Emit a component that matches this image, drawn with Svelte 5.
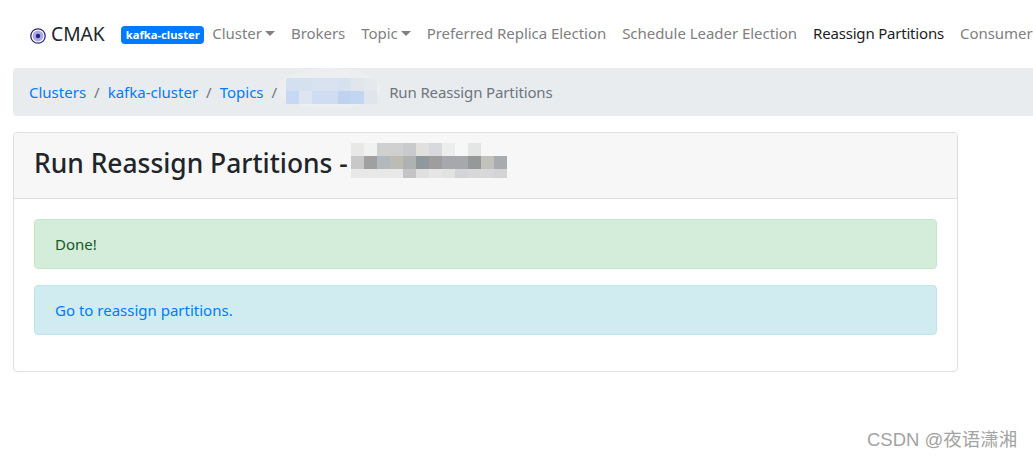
<script>
  const links = [
    { label: "Cluster", caret: true },
    { label: "Brokers" },
    { label: "Topic", caret: true },
    { label: "Preferred Replica Election" },
    { label: "Schedule Leader Election" },
    { label: "Reassign Partitions", active: true },
    { label: "Consumers" }
  ];
  const crumbs = ["Clusters", "kafka-cluster", "Topics"];

  // mosaic left over where the topic name was blurred out
  const crumbMosaic = [
    "#d3e0f2 #d6e1f0 #d8e2f0 #d8e2f0 #d6e1ef #e1e6ec #e6e9ec",
    "#c6d8f3 #dde5f0 #cfdcf1 #cfdcf1 #bfd3f1 #c2d6f2 #dfe5ea"
  ];
  const titleMosaic = [
    "#e8e8e6 #f0f2f2 #d0d0d0 #d0d0d0 #c8cacc #e0e0de #d8d9dc #eceeee #f7f7f7 #e4e6e6 #f7f7f7 #f7f7f7",
    "#c8c8c8 #a0a0a0 #b2b8bb #bcbcb4 #b0b2b2 #8f989c #a09e9c #a6a8ae #a6a8ae #959a98 #c2c2bc #a6acb0",
    "#e8e8e8 #e8e8e8 #e8e8e8 #e8e8e8 #c4c4c6 #e0e0e0 #e6e6e6 #e2e2e0 #d2d4d8 #d8d8d8 #d8d8da #d4d4d6"
  ];
  const cells = (rows) => rows.flatMap((r) => r.split(" "));
</script>

<nav class="navbar">
  <a class="brand" href="#top">
    <svg class="logo" viewBox="0 0 16 16" width="16" height="16" aria-hidden="true">
      <circle cx="8" cy="8" r="7.2" fill="#fff" stroke="#2c2a7c" stroke-width="1.3" />
      <circle cx="8" cy="8" r="5.4" fill="#a9a8e0" />
      <circle cx="8" cy="8" r="2.2" fill="#24218a" />
    </svg>
    CMAK
  </a>
  <span class="badge">kafka-cluster</span>
  <ul class="links">
    {#each links as link}
      <li class:active={link.active}>
        {link.label}{#if link.caret}<span class="caret"></span>{/if}
      </li>
    {/each}
  </ul>
</nav>

<div class="breadcrumb">
  {#each crumbs as crumb}
    <a href="#top">{crumb}</a>
    <span class="sep">/</span>
  {/each}
  <div class="crumb-blob">
    <div class="mosaic crumb-mosaic">
      {#each cells(crumbMosaic) as c}
        <i style:background={c}></i>
      {/each}
    </div>
  </div>
  <span class="current">Run Reassign Partitions</span>
</div>

<section class="card">
  <header class="card-header">
    <h2>Run Reassign Partitions -</h2>
    <div class="mosaic title-mosaic">
      {#each cells(titleMosaic) as c}
        <i style:background={c}></i>
      {/each}
    </div>
  </header>
  <div class="card-body">
    <div class="alert success">Done!</div>
    <div class="alert info"><a href="#top">Go to reassign partitions.</a></div>
  </div>
</section>

<span class="watermark">CSDN @夜语潇湘</span>

<style>
  :global(body) {
    margin: 0;
    background: #fff;
    overflow: hidden;
    font-family: "Noto Sans", "Open Sans", sans-serif;
    font-size: 15px;
    line-height: 24px;
    color: #212529;
  }
  a {
    color: #007bff;
    text-decoration: none;
  }
  .navbar {
    display: flex;
    align-items: center;
    height: 68px;
    padding-left: 30px;
    white-space: nowrap;
    overflow: hidden;
  }
  .brand {
    display: flex;
    align-items: center;
    gap: 5px;
    font-size: 19.2px;
    color: #212529;
  }
  .logo {
    margin-top: 4px;
  }
  .badge {
    margin-left: 16.5px;
    margin-top: 2px;
    padding: 0 4.5px;
    height: 18px;
    line-height: 18px;
    font-size: 11.25px;
    font-weight: 700;
    color: #fff;
    background: #007bff;
    border-radius: 4px;
  }
  .links {
    display: flex;
    gap: 16px;
    margin: -2px 0 0 8px;
    padding: 0;
    list-style: none;
    color: #808080;
    letter-spacing: -0.04px;
  }
  .active {
    color: #1d1d1d;
    letter-spacing: -0.2px;
  }
  .caret {
    display: inline-block;
    margin-left: 3px;
    vertical-align: 3px;
    border-top: 5px solid;
    border-left: 5px solid transparent;
    border-right: 5px solid transparent;
  }
  .breadcrumb {
    display: flex;
    align-items: center;
    height: 48px;
    margin: 0 0 16px 13px;
    padding-left: 16px;
    background: #e9ecef;
    border-radius: 4px 0 0 4px;
    white-space: nowrap;
  }
  .sep {
    margin: 0 8px;
    color: #6c757d;
  }
  .current {
    margin-left: 8px;
    color: #6c757d;
    letter-spacing: -0.13px;
  }
  .mosaic {
    display: grid;
  }
  .crumb-blob {
    align-self: flex-start;
    margin-left: -7px;
    padding: 10px 4px 5px 8px;
    background: #eceef0;
    border-radius: 50%;
  }
  .crumb-mosaic {
    grid-template-columns: repeat(7, 13px);
    grid-auto-rows: 13px;
  }
  .title-mosaic {
    grid-template-columns: repeat(12, 13px);
    grid-template-rows: 13px 13px 9px;
    align-self: flex-start;
    margin: 10px 0 0 3px;
  }
  .card {
    width: 945px;
    height: 240px;
    box-sizing: border-box;
    margin-left: 13px;
    border: 1px solid #dfdfdf;
    border-radius: 4px;
    overflow: hidden;
  }
  .card-header {
    display: flex;
    align-items: center;
    height: 65px;
    padding-left: 20px;
    background: #f7f7f7;
    border-bottom: 1px solid #dfdfdf;
  }
  h2 {
    margin: -6px 0 0;
    font-size: 26.4px;
    font-weight: 500;
    white-space: nowrap;
  }
  .card-body {
    padding: 20px;
  }
  .alert {
    height: 50px;
    box-sizing: border-box;
    display: flex;
    align-items: center;
    padding-left: 20px;
    margin-bottom: 16px;
    border: 1px solid;
    border-radius: 4px;
  }
  .success {
    color: #155724;
    background: #d4edda;
    border-color: #c3e6cb;
  }
  .info {
    background: #d1ecf1;
    border-color: #bee5eb;
  }
  .watermark {
    position: absolute;
    left: 867px;
    top: 428px;
    font-family: "Liberation Sans", "Noto Sans CJK SC", sans-serif;
    font-size: 18.5px;
    color: #a3a3a3;
    white-space: nowrap;
  }
</style>
